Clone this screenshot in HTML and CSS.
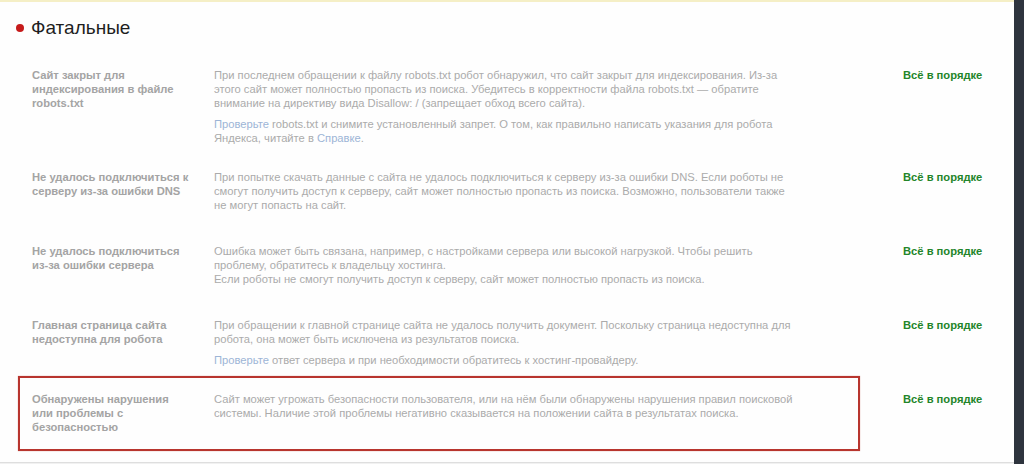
FILE: index.html
```html
<!DOCTYPE html>
<html lang="ru">
<head>
<meta charset="utf-8">
<title>Фатальные</title>
<link rel="stylesheet" href="styles.css">
</head>
<body>
<div class="screen">
  <main class="panel">
    <h2 class="group-title"><span class="dot"></span>Фатальные</h2>
    <div class="rows">
      <div class="row">
        <div class="name">Сайт закрыт для индексирования в файле robots.txt</div>
        <div class="desc">
          <p class="text">При последнем обращении к файлу robots.txt робот обнаружил, что сайт закрыт для индексирования. Из-за этого сайт может полностью пропасть из поиска. Убедитесь в корректности файла robots.txt — обратите внимание на директиву вида Disallow: / (запрещает обход всего сайта).</p>
          <p class="action"><a href="#">Проверьте</a> robots.txt и снимите установленный запрет. О том, как правильно написать указания для робота Яндекса, читайте в <a href="#">Справке</a>.</p>
        </div>
        <div class="status">Всё в порядке</div>
      </div>
      <div class="row">
        <div class="name">Не удалось подключиться к серверу из-за ошибки DNS</div>
        <div class="desc">
          <p class="text">При попытке скачать данные с сайта не удалось подключиться к серверу из-за ошибки DNS. Если роботы не смогут получить доступ к серверу, сайт может полностью пропасть из поиска. Возможно, пользователи также не могут попасть на сайт.</p>
        </div>
        <div class="status">Всё в порядке</div>
      </div>
      <div class="row">
        <div class="name">Не удалось подключиться из-за ошибки сервера</div>
        <div class="desc">
          <p class="text">Ошибка может быть связана, например, с настройками сервера или высокой нагрузкой. Чтобы решить проблему, обратитесь к владельцу хостинга.<br>Если роботы не смогут получить доступ к серверу, сайт может полностью пропасть из поиска.</p>
        </div>
        <div class="status">Всё в порядке</div>
      </div>
      <div class="row">
        <div class="name">Главная страница сайта недоступна для робота</div>
        <div class="desc">
          <p class="text">При обращении к главной странице сайта не удалось получить документ. Поскольку страница недоступна для робота, она может быть исключена из результатов поиска.</p>
          <p class="action"><a href="#">Проверьте</a> ответ сервера и при необходимости обратитесь к хостинг-провайдеру.</p>
        </div>
        <div class="status">Всё в порядке</div>
      </div>
      <div class="row row-marked">
        <div class="mark"></div>
        <div class="name">Обнаружены нарушения или проблемы с безопасностью</div>
        <div class="desc">
          <p class="text">Сайт может угрожать безопасности пользователя, или на нём были обнаружены нарушения правил поисковой системы. Наличие этой проблемы негативно сказывается на положении сайта в результатах поиска.</p>
        </div>
        <div class="status">Всё в порядке</div>
      </div>
    </div>
  </main>
  <aside class="side"></aside>
</div>
</body>
</html>
```
FILE: styles.css
```css
* { box-sizing: border-box; }
html, body {
  margin: 0;
  padding: 0;
  background: #f1f1f1;
}
body {
  font-family: "Liberation Sans", Arial, sans-serif;
  width: 1024px;
  height: 464px;
  overflow: hidden;
}
.screen {
  display: flex;
  height: 464px;
}
.panel {
  flex: 1;
  height: 463px;
  background: #fefefe;
  border-top: 2px solid #f5efc6;
  border-bottom: 1px solid #dedede;
  overflow: hidden;
}
.side {
  width: 10px;
  background: #2e343e;
}
.group-title {
  display: flex;
  align-items: center;
  margin: 14px 0 16px 16px;
  font-size: 19px;
  line-height: 24px;
  font-weight: normal;
  color: #1e1e1e;
}
.dot {
  width: 8px;
  height: 8px;
  border-radius: 50%;
  background: #c61b1b;
  margin-right: 7px;
}
.row {
  position: relative;
  display: grid;
  grid-template-columns: 182px 689px 1fr;
  padding: 12px 0 13px 32px;
  font-size: 11.2px;
  line-height: 14px;
}
.name {
  width: 157px;
  font-weight: bold;
  color: #a4a4a4;
}
.desc {
  width: 580px;
  color: #ababab;
}
.text { margin: 0 0 7px; }
.action { margin: 0; }
.desc a {
  color: #9db5d6;
  text-decoration: none;
}
.status {
  font-weight: bold;
  color: #23852a;
  white-space: nowrap;
}
.mark {
  position: absolute;
  left: 18px;
  top: -4px;
  bottom: -4px;
  width: 842px;
  border: 2px solid #b8352e;
  box-shadow: 0 0 1px rgba(184, 53, 46, 0.5);
  pointer-events: none;
}
```
